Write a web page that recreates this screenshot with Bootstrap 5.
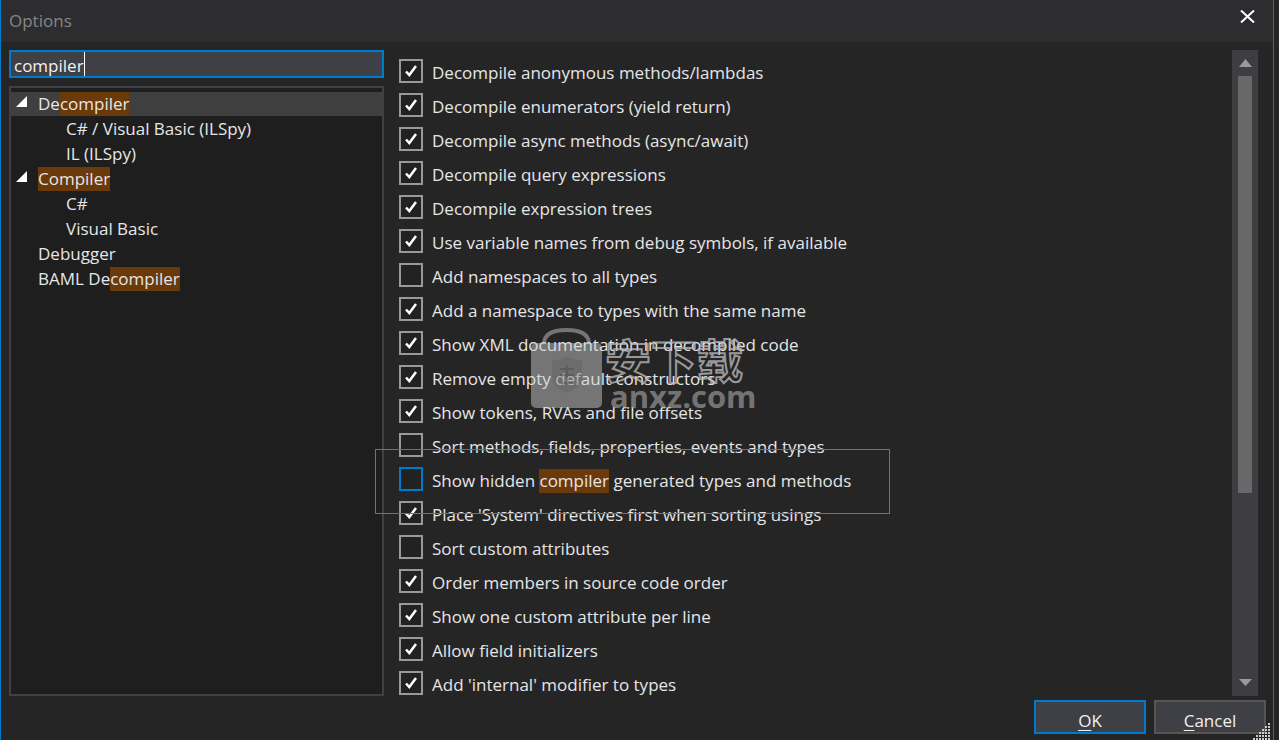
<!DOCTYPE html>
<html><head><meta charset="utf-8">
<link href="https://cdn.jsdelivr.net/npm/bootstrap@5.3.0/dist/css/bootstrap.min.css" rel="stylesheet">
<style>
html,body{margin:0;background:#252526;overflow:hidden}
body{font-family:"Open Sans","Noto Sans",sans-serif;font-size:17px;color:#e6e6e6}
.dlg{width:1274px;height:740px;background:#252526;border-left:1px solid #007acc;border-right:1px solid #007acc;position:relative}
.ttl{height:42px;background:#2d2d30;color:#868686;padding:0 8px;font-size:17px}
.ttlx{width:15px;height:13px;margin:-9px 10px 0 0}
.mainrow{height:652px;padding:8px 15px 0 8px;gap:15px}
.leftp{width:375px}
.srch{height:28px;background:#3f3f46;border:2px solid #007acc;padding:0 0 0 3px;line-height:27px;margin-bottom:8px;color:#f1f1f1}
.caret-b{display:inline-block;width:1px;height:24px;background:#fff;vertical-align:top;margin-left:0}
.tree{height:610px;background:#1e1e1e;border:2px solid #3f3f46;padding-top:4px}
.tn{height:24px;line-height:24px;margin-bottom:1px;padding-left:27px;display:flex;white-space:nowrap;position:relative}
.tn.sel{background:#3f3f3f}
.tn.sub{padding-left:55px}
.tri{position:absolute;left:5px;top:4px;width:11px;height:11px}
.hl{background:#6a3a0b;display:inline-block;height:24px}
.optlist{flex:1;min-width:0;padding-top:9px}
.opt{height:34px;display:flex;gap:9px;align-items:flex-start;white-space:nowrap}
.cbx{width:24px;height:24px;border:2px solid #999;flex:none;background:#222223;display:flex;align-items:center;justify-content:center}
.cbx.foc{border-color:#007acc}
.txtopt{line-height:28px}
.txtopt .hl{line-height:24px;height:24px;vertical-align:baseline}
.sbar{width:26px;height:646px;background:#3e3e42;display:flex;flex-direction:column;align-items:center}
.sthumb{width:14px;height:417px;background:#686868;margin:9px 0 auto}
.sup{margin-top:9px;display:block;flex:none}
.sdn{margin-bottom:10px;display:block;flex:none}
.foot{gap:8px;padding-right:7px;padding-top:6px}
.bt{width:112px;height:34px;background:#3f3f46;border:2px solid #555;color:#f1f1f1;font-size:17px;line-height:28px;padding:5px 0 0;border-radius:0;text-align:center}
.bt.pri{border-color:#007acc}
.bt u{text-underline-offset:3px}
.tip{position:absolute;left:374px;top:449px;width:515px;height:65px;border:1px solid #e2433b;pointer-events:none}
.grip{position:absolute;right:3px;bottom:0;width:17px;height:17px}
.wm-bag{position:absolute;left:530px;top:328px;width:71px;height:80px;pointer-events:none}
.wm-cn{position:absolute;left:604px;top:330px;font:700 46px/56px "Noto Sans CJK SC",sans-serif;color:transparent;-webkit-text-stroke:2px rgba(185,185,185,.8);white-space:nowrap;pointer-events:none}
.wm-en{position:absolute;left:609px;top:376px;font:700 31px/40px "Open Sans",sans-serif;color:rgba(170,170,170,.62);white-space:nowrap;pointer-events:none}
</style></head><body>
<div class="dlg d-flex flex-column">
<div class="ttl d-flex align-items-center justify-content-between">
<span>Options</span>
<svg class="ttlx" viewBox="0 0 15 13"><path d="M1 0.5L14 12.5M14 0.5L1 12.5" stroke="#fff" stroke-width="2"/></svg>
</div>
<div class="mainrow d-flex">
<div class="leftp">
<div class="srch">compiler<span class="caret-b"></span></div>
<div class="tree">
<div class="tn sel"><svg class="tri" viewBox="0 0 11 11"><path d="M11 0V11H0Z" fill="#fff"/></svg>De<span class="hl">compiler</span></div>
<div class="tn sub">C# / Visual Basic (ILSpy)</div>
<div class="tn sub">IL (ILSpy)</div>
<div class="tn"><svg class="tri" viewBox="0 0 11 11"><path d="M11 0V11H0Z" fill="#fff"/></svg><span class="hl">Compiler</span></div>
<div class="tn sub">C#</div>
<div class="tn sub">Visual Basic</div>
<div class="tn">Debugger</div>
<div class="tn">BAML De<span class="hl">compiler</span></div>
</div>
</div>
<div class="optlist" id="o"></div>
<div class="sbar">
<svg class="sup" width="13" height="8" viewBox="0 0 13 8"><path d="M6.5 0L13 8H0Z" fill="#999"/></svg>
<div class="sthumb"></div>
<svg class="sdn" width="13" height="7" viewBox="0 0 13 7"><path d="M0 0H13L6.5 7Z" fill="#999"/></svg>
</div>
</div>
<div class="foot d-flex justify-content-end">
<button class="bt pri"><u>O</u>K</button><button class="bt"><u>C</u>ancel</button>
</div>
<div class="tip"></div>
<svg class="grip" id="g" viewBox="0 0 17 17"></svg>
<svg class="wm-bag" viewBox="0 0 71 80"><path d="M13 16C13 5 24 2 35.500 2S58 5 58 16" fill="none" stroke="rgba(205,205,205,.48)" stroke-width="4"/><path d="M5 15H66A5 5 0 0 1 71 20V75A5 5 0 0 1 66 80H5A5 5 0 0 1 0 75V20A5 5 0 0 1 5 15Z" fill="rgba(205,205,205,.48)"/><path d="M21 33L36 29L51 33V50C51 58 43 62 36 65C29 62 21 58 21 50Z" fill="rgba(90,90,90,.3)"/><path d="M29 41H43M29 47H43M36 37V55M30 55H42" fill="none" stroke="rgba(70,70,70,.4)" stroke-width="2"/></svg>
<div class="wm-cn">安下载</div>
<div class="wm-en">anxz.com</div>
</div>
<script>
const L=[["Decompile anonymous methods/lambdas",1],["Decompile enumerators (yield return)",1],["Decompile async methods (async/await)",1],["Decompile query expressions",1],["Decompile expression trees",1],["Use variable names from debug symbols, if available",1],["Add namespaces to all types",0],["Add a namespace to types with the same name",1],["Show XML documentation in decompiled code",1],["Remove empty default constructors",1],["Show tokens, RVAs and file offsets",1],["Sort methods, fields, properties, events and types",0],['Show hidden <span class="hl">compiler</span> generated types and methods',0,1],["Place 'System' directives first when sorting usings",1],["Sort custom attributes",0],["Order members in source code order",1],["Show one custom attribute per line",1],["Allow field initializers",1],["Add 'internal' modifier to types",1]];
document.getElementById('o').innerHTML=L.map(l=>`<div class="opt"><span class="cbx${l[2]?' foc':''}">${l[1]?'<svg width="12" height="12" viewBox="0 0 12 12"><path d="M1 6.5L4.300 10L11 1" fill="none" stroke="#fff" stroke-width="2.500"/></svg>':''}</span><span class="txtopt">${l[0]}</span></div>`).join('');
let g='';for(let r=0;r<6;r++)for(let c=0;c<=r;c++)g+=`<rect x="${15-3*c}" y="${3*r}" width="2" height="2" fill="#ccc"/>`;
document.getElementById('g').innerHTML=g;
</script>
<script src="https://cdn.jsdelivr.net/npm/bootstrap@5.3.0/dist/js/bootstrap.bundle.min.js"></script>
</body></html>
